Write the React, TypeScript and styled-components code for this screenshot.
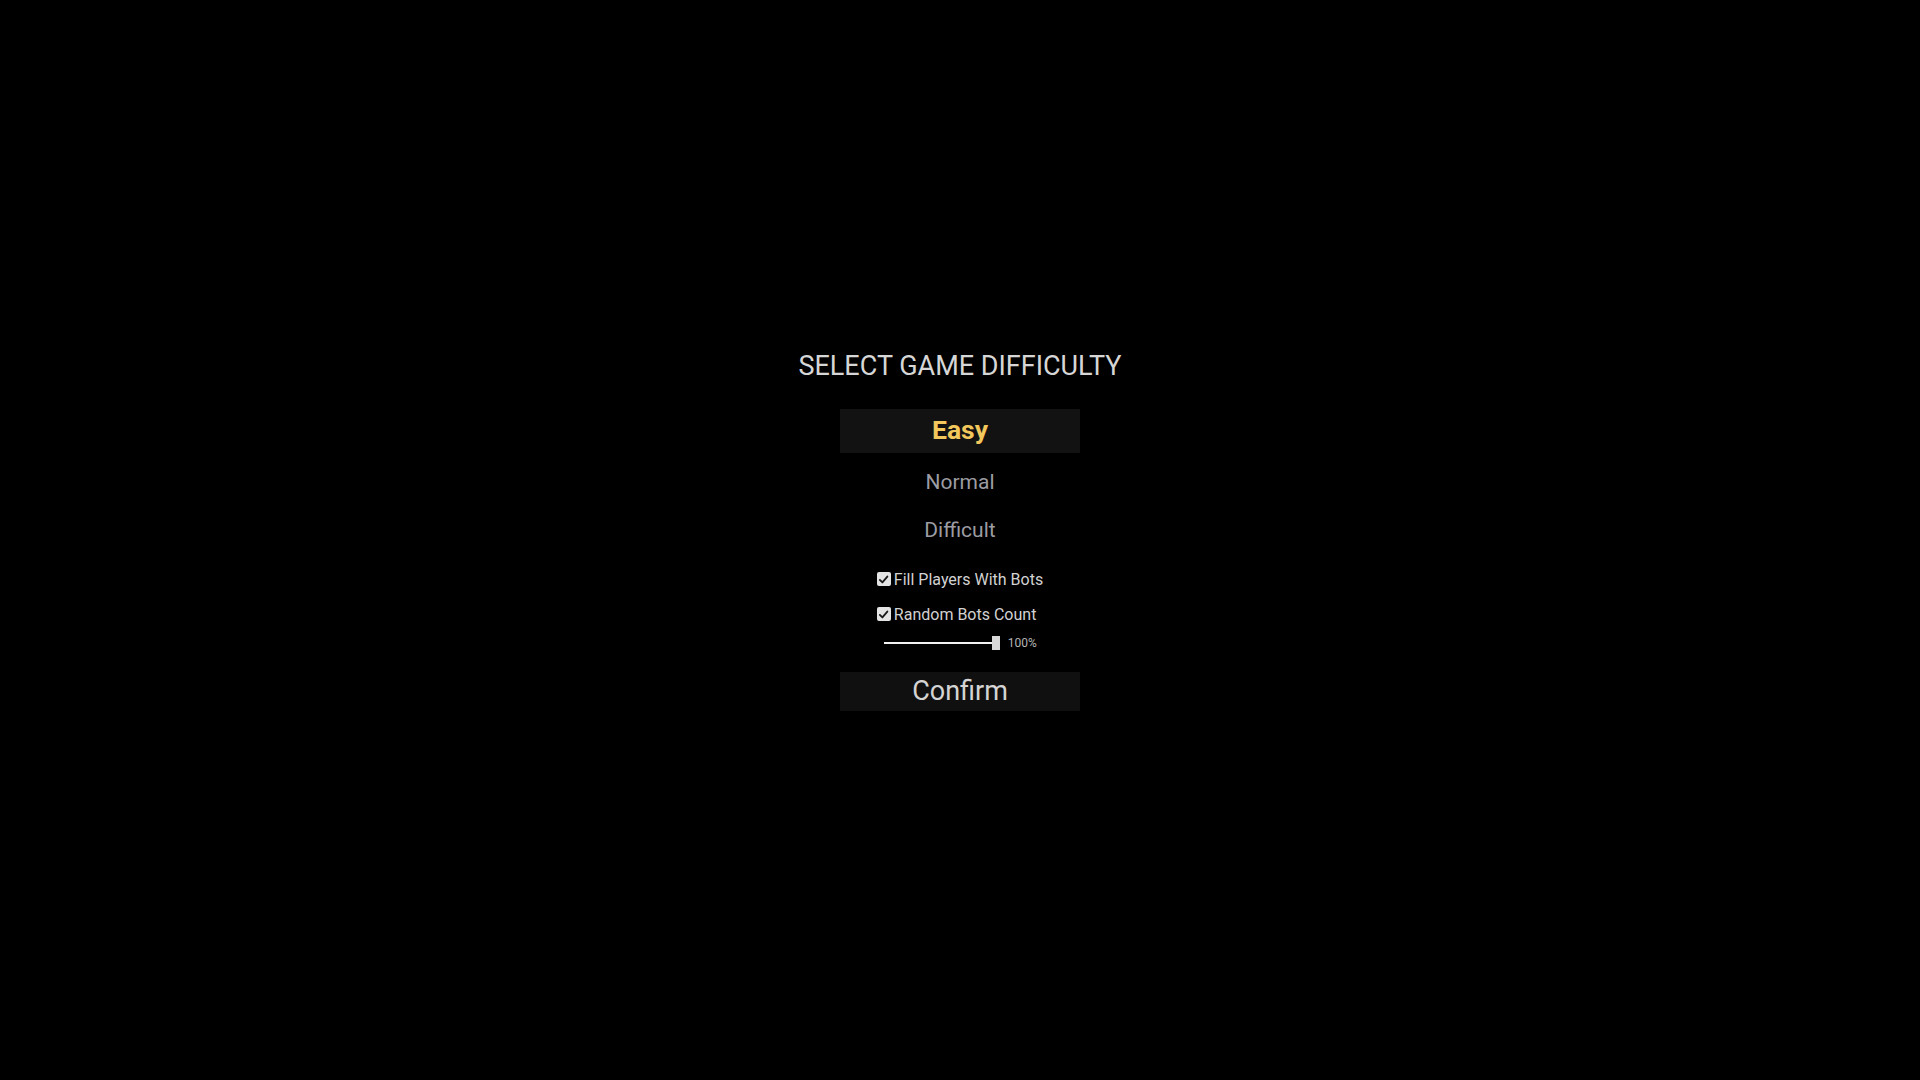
import styled, { createGlobalStyle } from "styled-components";
import { useState } from "react";

const GlobalStyle = createGlobalStyle`
  html, body {
    margin: 0;
    padding: 0;
    background: #000;
  }
  body {
    font-family: Roboto, "Liberation Sans", sans-serif;
  }
`;

const Screen = styled.main`
  width: 1920px;
  height: 1080px;
  background: #000;
  display: flex;
  flex-direction: column;
  align-items: center;
  padding-top: 350px;
  box-sizing: border-box;
`;

const Title = styled.h1`
  margin: 0 0 27px;
  font-size: 27px;
  line-height: 32px;
  font-weight: 400;
  color: #d6d6d6;
`;

const Options = styled.div`
  display: flex;
  flex-direction: column;
  align-items: center;
  gap: 8px;
`;

const Option = styled.button<{ $active?: boolean }>`
  width: 240px;
  height: ${(p) => (p.$active ? "44px" : "40px")};
  margin-bottom: ${(p) => (p.$active ? "1px" : "0")};
  border: none;
  padding: 0 0 ${(p) => (p.$active ? "3px" : "0")};
  background: ${(p) => (p.$active ? "#121212" : "transparent")};
  color: ${(p) => (p.$active ? "#f2c75c" : "#9c9ca2")};
  font-family: Roboto, "Liberation Sans", sans-serif;
  font-size: ${(p) => (p.$active ? "26.5px" : "21px")};
  font-weight: ${(p) => (p.$active ? 700 : 400)};
  cursor: pointer;
`;

const Settings = styled.div`
  margin-top: 17px;
  display: flex;
  flex-direction: column;
  align-items: flex-start;
  gap: 11px;
`;

const CheckRow = styled.label`
  display: flex;
  align-items: center;
  gap: 3px;
  height: 24px;
  font-size: 16px;
  color: #d2d2d2;
  cursor: pointer;
`;

const Box = styled.span`
  width: 14px;
  height: 14px;
  border-radius: 2px;
  background: #e4e4e4;
  display: flex;
  align-items: center;
  justify-content: center;
`;

const SliderRow = styled.div`
  margin-top: -1px;
  margin-left: 7px;
  display: flex;
  align-items: center;
  gap: 8px;
  height: 14px;
`;

const Track = styled.div`
  position: relative;
  width: 116px;
  height: 14px;
  display: flex;
  align-items: center;
`;

const TrackLine = styled.div`
  flex: 1;
  height: 2px;
  background: #f2f2f2;
`;

const Thumb = styled.div`
  position: absolute;
  right: 0;
  top: 0;
  width: 8px;
  height: 14px;
  background: #d8d8d8;
`;

const Percent = styled.span`
  font-size: 12px;
  color: #b4b4b4;
`;

const Confirm = styled.button`
  margin-top: 22px;
  width: 240px;
  height: 39px;
  border: none;
  padding: 0 0 2px;
  background: #101010;
  color: #d4d4d4;
  font-family: Roboto, "Liberation Sans", sans-serif;
  font-size: 27px;
  font-weight: 400;
  cursor: pointer;
`;

const Check = () => (
  <svg width="11" height="11" viewBox="0 0 12 12">
    <path
      d="M2 6.4 L4.8 9.2 L10.2 2.8"
      fill="none"
      stroke="#1a1a1a"
      strokeWidth="2"
      strokeLinecap="round"
      strokeLinejoin="round"
    />
  </svg>
);

const levels = ["Easy", "Normal", "Difficult"];

const App = () => {
  const [level, setLevel] = useState("Easy");

  return (
    <>
      <GlobalStyle />
      <Screen>
        <Title>SELECT GAME DIFFICULTY</Title>
        <Options>
          {levels.map((l) => (
            <Option key={l} $active={l === level} onClick={() => setLevel(l)}>
              {l}
            </Option>
          ))}
        </Options>
        <Settings>
          <CheckRow>
            <Box>
              <Check />
            </Box>
            Fill Players With Bots
          </CheckRow>
          <CheckRow>
            <Box>
              <Check />
            </Box>
            Random Bots Count
          </CheckRow>
          <SliderRow>
            <Track>
              <TrackLine />
              <Thumb />
            </Track>
            <Percent>100%</Percent>
          </SliderRow>
        </Settings>
        <Confirm>Confirm</Confirm>
      </Screen>
    </>
  );
};

export default App;
